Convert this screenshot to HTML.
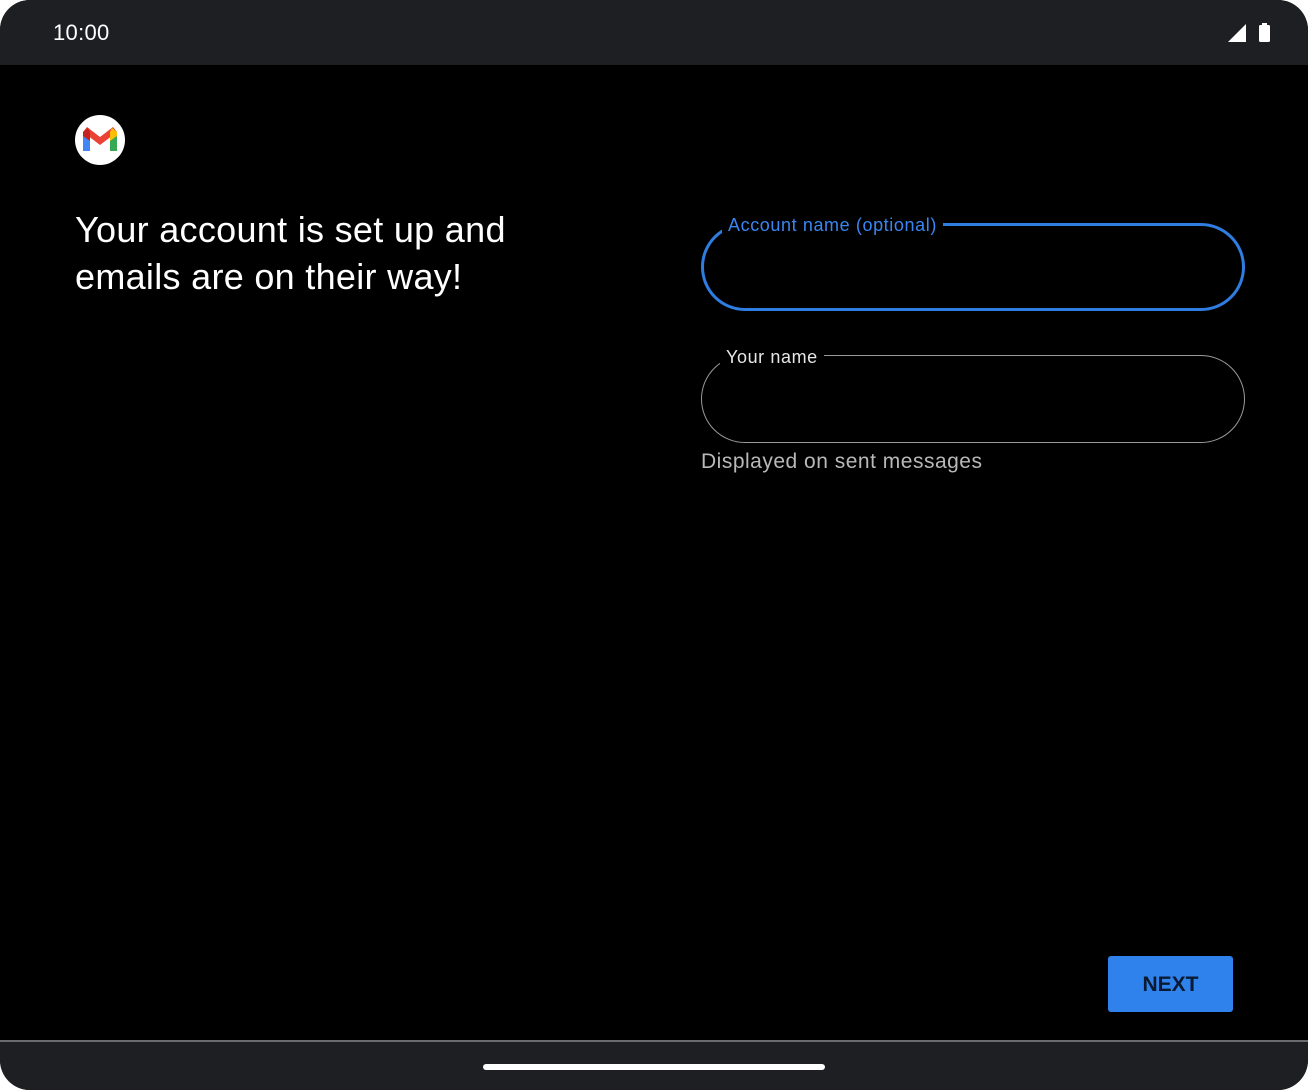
<!DOCTYPE html>
<html><head><style>
html,body{margin:0;padding:0;background:#fff;}
body{width:1308px;height:1090px;position:relative;overflow:hidden;font-family:"Liberation Sans",sans-serif;}
.frame{position:absolute;left:0;top:0;width:1308px;height:1090px;background:#000;border-radius:30px;overflow:hidden;}
.top{position:absolute;left:0;top:0;width:1308px;height:65px;background:#1e1f22;}
.time{position:absolute;left:53px;top:20px;color:#fff;font-size:22px;letter-spacing:0.3px;}
.bot{position:absolute;left:0;top:1040px;width:1308px;height:50px;background:#1e1f22;border-top:2px solid #6a6b6e;box-sizing:border-box;}
.handle{position:absolute;left:483px;top:22px;width:342px;height:6px;border-radius:3px;background:#fff;}
.logo{position:absolute;left:75px;top:115px;width:50px;height:50px;border-radius:50%;background:#fff;}
h1{position:absolute;left:75px;top:206px;margin:0;color:#fff;font-weight:normal;font-size:36px;line-height:47px;letter-spacing:0.3px;}
.field{position:absolute;left:701px;width:544px;height:88px;box-sizing:border-box;border-radius:44px;}
.f1{top:223px;border:3px solid #2f7de1;}
.f2{top:355px;border:1.5px solid #9a9a9a;}
.lbl{position:absolute;top:-11px;left:18px;background:#000;padding:0 6px;font-size:18px;letter-spacing:0.6px;}
.f1 .lbl{color:#3a86f0;}
.f2 .lbl{color:#e6e6e6;top:-9px;}
.help{position:absolute;left:701px;top:450px;color:#b8b8b8;font-size:21px;letter-spacing:0.5px;}
.btn{position:absolute;left:1108px;top:956px;width:125px;height:56px;background:#2f82ec;border-radius:3px;color:#0a1a33;font-size:21px;font-weight:bold;text-align:center;line-height:58px;}
</style></head><body>
<div class="frame">
<div class="top"><div class="time">10:00</div>
<svg style="position:absolute;left:1226px;top:22px" width="50" height="22" viewBox="0 0 50 22">
<polygon points="2,20 20,2 20,20" fill="#fff"/>
<rect x="33" y="3" width="11" height="17" rx="1.5" fill="#fff"/><rect x="36" y="1" width="5" height="3" fill="#fff"/>
</svg></div>
<div class="logo"><svg width="50" height="50" viewBox="0 0 50 50">
<path d="M8 17 V36 H15 V22 Z" fill="#4285f4"/>
<path d="M35 22 V36 H42 V17 Z" fill="#34a853"/>
<path d="M8 17 L25 30 L42 17 L38 12 L25 22 L12 12 Z" fill="#ea4335"/>
<path d="M37 13 L42 17 V21 L35 26 V17 Z" fill="#fbbc04"/>
<path d="M13 13 L8 17 V21 L15 26 V17 Z" fill="#c5221f"/>
</svg></div>
<h1>Your account is set up and<br>emails are on their way!</h1>
<div class="field f1"><span class="lbl">Account name (optional)</span></div>
<div class="field f2"><span class="lbl">Your name</span></div>
<div class="help">Displayed on sent messages</div>
<div class="btn">NEXT</div>
<div class="bot"><div class="handle"></div></div>
</div>
</body></html>
